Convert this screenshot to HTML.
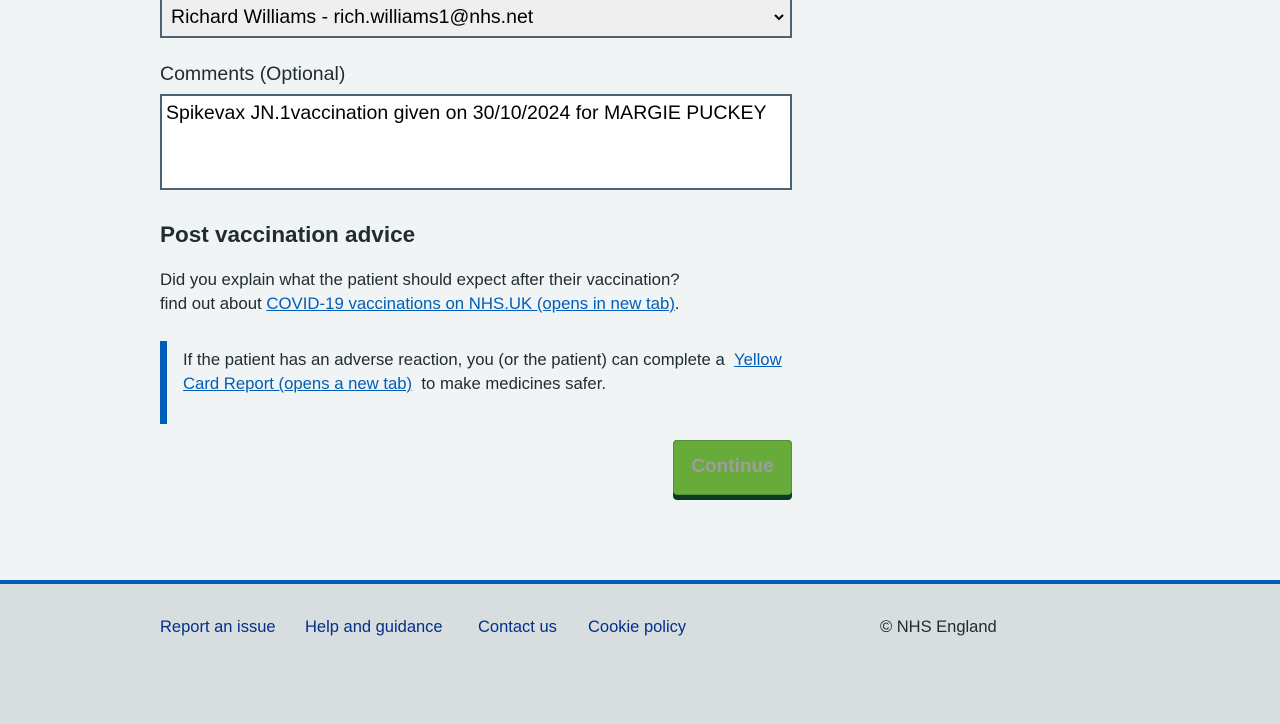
<!DOCTYPE html>
<html><head><style>
body{margin:0;width:1280px;height:720px;background:#f0f4f5;font-family:"Liberation Sans",sans-serif;color:#212b32;position:relative;overflow:hidden}
.a{position:absolute}
a{color:#005eb8;text-decoration:underline}
</style></head><body>
<div class="a" style="left:160px;top:-6px;width:628px;height:40px;border:2px solid #4c6272;background:#efefef;font-size:19.5px;color:#000;">
<span class="a" style="left:9px;top:10px">Richard Williams - rich.williams1@nhs.net</span>
<svg class="a" style="left:612px;top:17px" width="10" height="8" viewBox="0 0 10 8"><path d="M1 2l4 4 4-4" stroke="#000" stroke-width="2" fill="none"/></svg>
</div>
<div class="a" style="left:160px;top:63px;font-size:19.5px">Comments (Optional)</div>
<div class="a" style="left:160px;top:94px;width:628px;height:92px;border:2px solid #4c6272;background:#fff;font-size:19.5px;color:#000">
<span class="a" style="left:4px;top:6px">Spikevax JN.1vaccination given on 30/10/2024 for MARGIE PUCKEY</span></div>
<div class="a" style="left:160px;top:222px;font-size:22.5px;font-weight:bold">Post vaccination advice</div>
<div class="a" style="left:160px;top:268px;font-size:16.8px;line-height:24px">Did you explain what the patient should expect after their vaccination?<br>find out about <a>COVID-19 vaccinations on NHS.UK (opens in new tab)</a>.</div>
<div class="a" style="left:160px;top:341px;width:7px;height:83px;background:#005eb8"></div>
<div class="a" style="left:183px;top:348px;width:610px;font-size:16.7px;line-height:24px">If the patient has an adverse reaction, you (or the patient) can complete a &nbsp;<a>Yellow Card Report (opens a new tab)</a> &nbsp;to make medicines safer.</div>
<div class="a" style="left:673px;top:440px;width:119px;height:60px;background:#0b3b20;border-radius:4px"></div>
<div class="a" style="left:673px;top:440px;width:117px;height:53px;background:#67ab3a;border:1px solid #5a8f3a;border-radius:4px;color:#9d9d9d;font-weight:bold;font-size:19px;text-align:center;line-height:52px">Continue</div>
<div class="a" style="left:0;top:580px;width:1280px;height:140px;background:#d8dde0;border-top:4px solid #005eb8"></div>
<div class="a" style="left:160px;top:618px;font-size:16.5px;color:#003087">Report an issue</div>
<div class="a" style="left:305px;top:618px;font-size:16.5px;color:#003087">Help and guidance</div>
<div class="a" style="left:478px;top:618px;font-size:16.5px;color:#003087">Contact us</div>
<div class="a" style="left:588px;top:618px;font-size:16.5px;color:#003087">Cookie policy</div>
<div class="a" style="left:880px;top:618px;font-size:16.5px">© NHS England</div>
</body></html>
